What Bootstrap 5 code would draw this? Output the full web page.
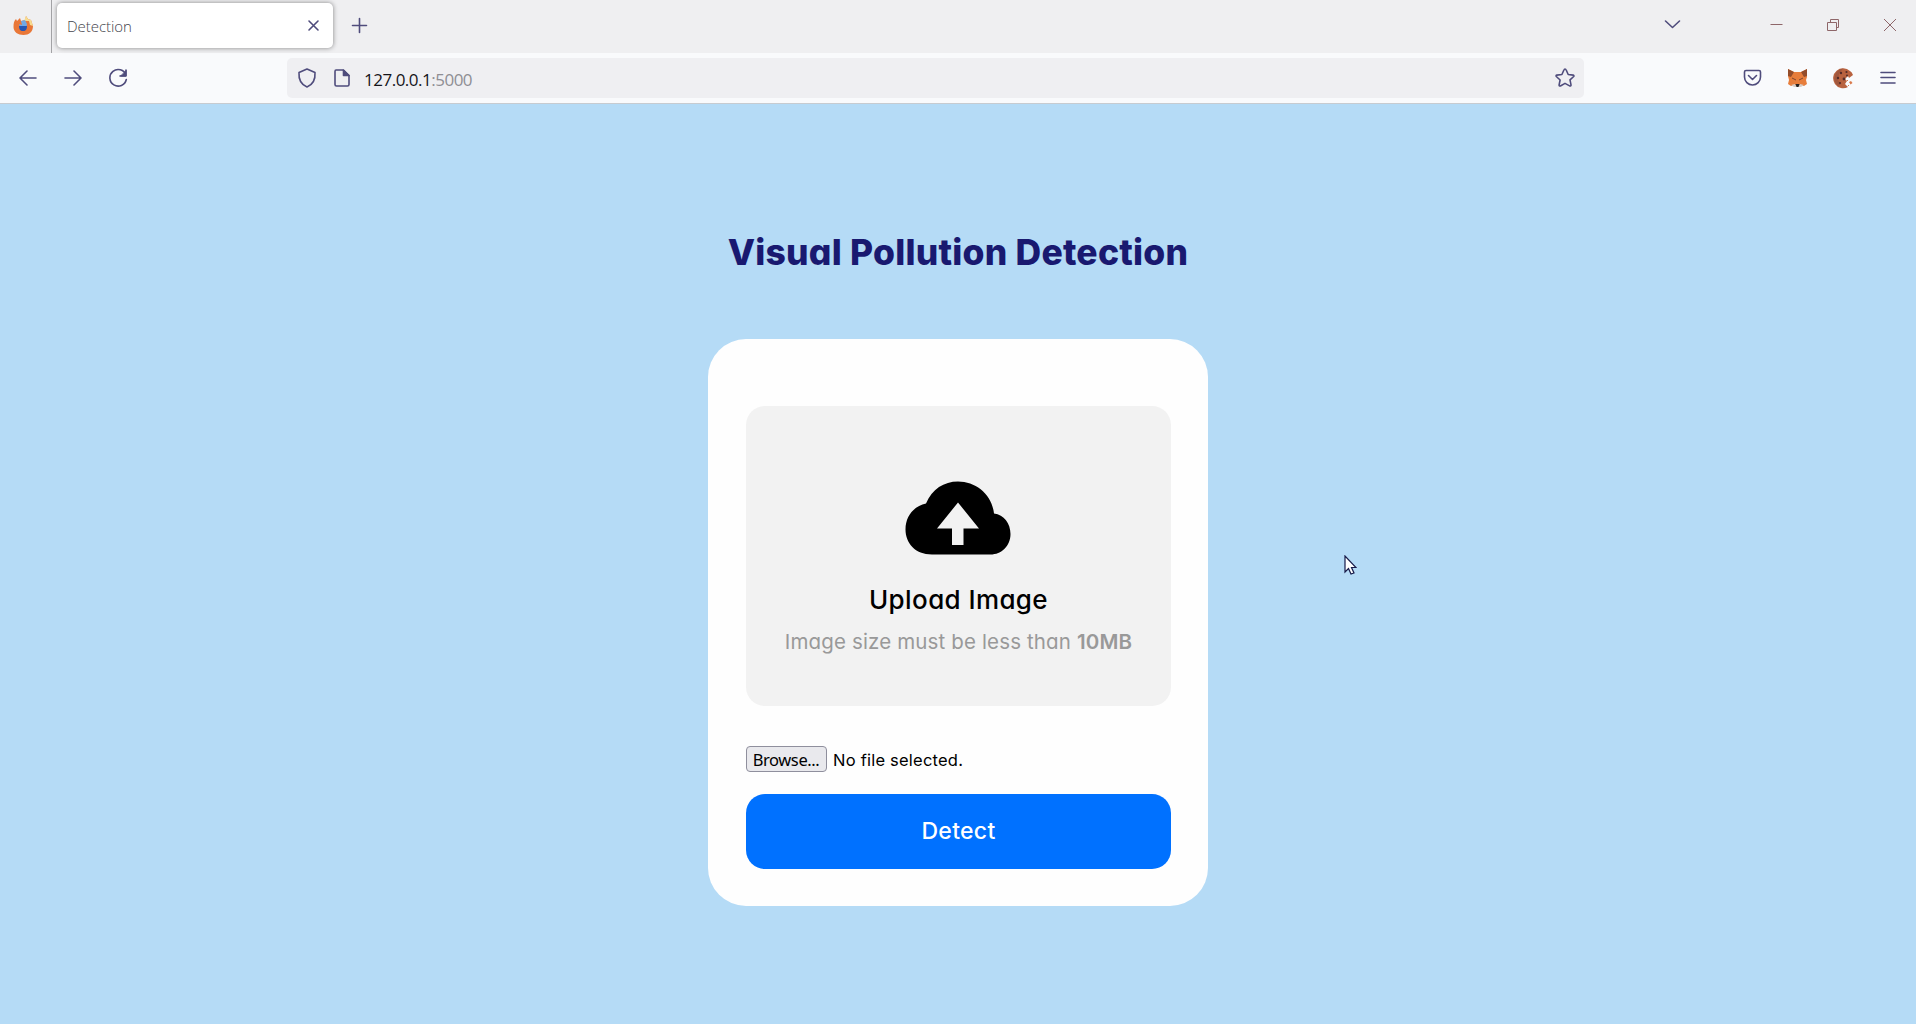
<!DOCTYPE html>
<html lang="en">
<head>
<meta charset="utf-8">
<title>Detection</title>
<link rel="stylesheet" href="https://cdn.jsdelivr.net/npm/bootstrap@5.3.0/dist/css/bootstrap.min.css">
<style>
html, body { height: 100%; }
body { background: #b5dbf6; overflow: hidden; font-family: Inter, "Liberation Sans", sans-serif; color: #000; }
svg { display: block; flex: none; }
.ico { fill: none; stroke: #4f4c7c; stroke-width: 1.6; stroke-linecap: round; stroke-linejoin: round; }
.tabstrip { height: 53px; background: #efeff1; }
.pin { width: 52px; border-right: 1px solid #a3a3a6; padding-left: 13px; }
.browser-tab { width: 276px; height: 45px; margin: 3px 0 0 5px; padding: 0 15px 0 10px; background: #fff; border-radius: 5px; box-shadow: 0 0 5px rgba(0,0,0,.45); }
.browser-tab span { font: 300 15px "Open Sans", sans-serif; letter-spacing: -.05px; color: #45454d; }
.new-tab { margin: 16px 0 0 17px; }
.window-controls { padding: 0 19px 3px 0; }
.toolbar-row { height: 51px; background: #f9fafc; border-bottom: 1px solid #c7cbd0; padding-left: 18px; padding-right: 19px; }
.address { width: 1297px; height: 40px; margin-left: 159px; padding: 0 9px 0 10px; background: #efeff2; border-radius: 5px; }
.url-text { font: 17px "Open Sans", "Noto Sans", sans-serif; margin-left: 14px; padding-top: 3px; color: #15141a; letter-spacing: -.5px; white-space: nowrap; }
.url-text span { color: #8e8e94; }
.extensions { width: 155px; }
.brand-type { font-feature-settings: "cv11", "ss03"; white-space: nowrap; line-height: 1; }
.page-title { font-size: 35.5px; font-weight: 800; color: #191970; margin: 131px 0 68.5px; letter-spacing: .22px; }
.panel { width: 500px; height: 567px; border-radius: 38px; padding: 67px 37px 0 38px; background: #fefefe; }
.drop { height: 300px; border-radius: 19px; background: #f2f2f2; padding-top: 75px; }
.drop svg { margin-right: 2px; }
.drop h2 { font-size: 26px; font-weight: 500; margin: 32px 0 0; letter-spacing: .4px; }
.drop p { font-size: 20.5px; font-weight: 400; color: #999; margin: 19px 0 0; letter-spacing: .14px; }
.drop p b { font-weight: 600; }
.picker { height: 26px; margin-top: 40px; }
.browse { width: 81px; height: 26px; border: 1px solid #8f8f9d; border-radius: 4px; background: #e9e9ed; font: 16.5px/22px "Noto Sans", sans-serif; padding: 1px 1px 0 0; color: #000; letter-spacing: -.4px; }
.nofile { font-size: 16.5px; margin-left: 6px; padding-top: 2px; letter-spacing: .22px; }
.detect { height: 75px; margin-top: 22px; padding: 0; border-radius: 19px; background: #0071ff; border: 0; color: #fff; font-size: 23px; font-weight: 500; letter-spacing: .3px; }
.pointer { position: absolute; left: 1344px; top: 555px; }
</style>
<script src="https://cdn.jsdelivr.net/npm/bootstrap@5.3.0/dist/js/bootstrap.bundle.min.js"></script>
</head>
<body class="d-flex flex-column">
<header>
  <div class="tabstrip d-flex align-items-start">
    <div class="pin h-100 d-flex align-items-center">
      <svg width="21" height="21" viewBox="0 0 21 21"><path d="M3 3l1 2 3-3 1 3 4-1 1-4 2 3 3 1 2 6c0 6-4 9-9.500 9S.500 16 .500 11C.500 7 1 5 3 3z" fill="#e97738"/><path d="M13 0l2 3 3 1 2 6-3-1-1-4-5 0z" fill="#f6dc91"/><path d="M8 5l4-1 2 4-1 5-6-2-1-3 3 1z" fill="#71a8e5"/><path d="M6 10h8c0 3-1 5-4 5s-4-2-4-5z" fill="#2556b4"/></svg>
    </div>
    <div class="browser-tab d-flex align-items-center justify-content-between">
      <span>Detection</span>
      <svg class="ico overflow-visible" width="9" height="9" viewBox="0 0 9 9"><path d="M0 0l9 9M9 0l-9 9"/></svg>
    </div>
    <svg class="ico new-tab" width="20" height="20" viewBox="0 0 20 20"><path d="M2.500 9.500h14M9.500 2.500v14"/></svg>
    <div class="window-controls ms-auto d-flex align-items-center h-100">
      <svg width="234" height="20" viewBox="0 0 234 20" fill="none" stroke="#8e6669" stroke-width="1"><path class="ico" d="M2.500 6l7 6.500 7-6.500"/><path d="M107.500 9.500h12M164.500 7.500h9v8h-9zM167.500 7.500v-3h8v8h-2M221 4l12 12M233 4l-12 12"/></svg>
    </div>
  </div>
  <div class="toolbar-row d-flex align-items-center">
    <svg class="ico" width="110" height="20" viewBox="0 0 110 20"><path d="M18 10H2M9 3l-7 7 7 7M47 10h16M56 3l7 7-7 7M108 7a8.300 8.300 0 1 0 .3 4.500M108 2v6h-6"/><path d="M108 3v5h-5z" fill="#4f4c7c" stroke-width="1"/></svg>
    <div class="address d-flex align-items-center">
      <svg class="ico" width="20" height="22" viewBox="0 0 20 22"><path d="M10 2l8 3.500c.5 7-2 12-8 14.500C4 17.500 1.500 12.500 2 5.500z"/></svg>
      <svg class="ico ms-3" width="17" height="20" viewBox="0 0 17 20"><path d="M3 2h7l6 5.500v9q0 1.500-1.500 1.500h-11Q2 18 2 16.500v-13Q2 2 3 2z"/><path d="M10.500 2v5.500H16z" fill="#4f4c7c"/></svg>
      <div class="url-text">127.0.0.1<span>:5000</span></div>
      <svg class="ico ms-auto" width="20" height="20" viewBox="0 0 20 20"><path d="M10 1q.8 0 1.200 1l2 4.500 5 .6q1.200.4.5 1.400l-3.700 3.400 1 5q0 1.400-1.400 1L10 15.400 5.400 18q-1.300.3-1.300-1l1-5-3.800-3.500Q.6 7.400 1.900 7.100l5-.6L8.900 2Q9.300 1 10 1z"/></svg>
    </div>
    <div class="extensions ms-auto d-flex align-items-center justify-content-between">
      <svg class="ico" width="20" height="20" viewBox="0 0 20 20"><path d="M4 2.500h13q1.500 0 1.500 1.500v5a8 8 0 0 1-16 0V4q0-1.500 1.500-1.500zM6.500 7.500l4 4 4-4"/></svg>
      <svg width="21" height="20" viewBox="0 0 21 20"><path d="M1 1l6 3h7l6-3v8l-1 3 1 4-3 2H4l-3-2 1-4-1-4z" fill="#e77d3b"/><path d="M1 1l6 3-3 5-3-1zM20 1l-6 3 3 5 3-1z" fill="#934c2a"/><path d="M4 17l4-1 2 3h-3zM17 17l-4-1-2 3h3z" fill="#d8ccc5"/><path d="M5 10l4 2M16 10l-4 2" stroke="#7b4531"/><path d="M8.500 16h4l-1 3h-2z" fill="#222"/></svg>
      <svg width="21" height="21" viewBox="0 0 21 21"><path d="M17 3A10 10 0 1 0 15 19l-3-3 2-3-2-2 3-3 1 2 4-3q-1-3-3-4z" fill="#b8623f"/><path d="M10 .5A10 10 0 0 0 5 18l3-2-3-4 1-6z" fill="#a1573d"/><g fill="#542c28"><circle cx="8" cy="5" r="1.200"/><circle cx="13.500" cy="4" r="1.100"/><circle cx="5" cy="10" r="1.200"/><circle cx="11" cy="11" r="1.400"/><circle cx="7" cy="15" r="1.100"/><circle cx="14" cy="7.500" r="1"/></g><path d="M16 14l2-1 1.500 2-2 1.500zM14 12h1v1h-1zM15 17h1v1h-1z" fill="#d97a4c"/></svg>
      <svg class="ico" width="18" height="18" viewBox="0 0 18 18"><path d="M2 3.500h14M2 8.500h14M2 14h14"/></svg>
    </div>
  </div>
</header>
<main class="d-flex flex-column align-items-center">
  <h1 class="page-title brand-type">Visual Pollution Detection</h1>
  <section class="panel">
    <div class="drop d-flex flex-column align-items-center">
      <svg width="106" height="74" viewBox="0 0 106 74"><path fill-rule="evenodd" d="M27 73.500C10 73.500.500 62 .500 48.500.500 35 9 25 21 22.500 27 8 39 .5 53 .5c18 0 34 13 36 32 10 1 16.500 10 16.500 20.500 0 12-9 20.500-20 20.500zM53 21.500L32 47.500h15V64h11.500V47.500H74z"/></svg>
      <h2 class="brand-type">Upload Image</h2>
      <p class="brand-type">Image size must be less than <b>10MB</b></p>
    </div>
    <div class="picker d-flex align-items-center">
      <button class="browse" type="button">Browse...</button>
      <span class="nofile brand-type">No file selected.</span>
    </div>
    <button class="detect brand-type w-100" type="button">Detect</button>
  </section>
</main>
<svg class="pointer" width="13" height="21" viewBox="0 0 13 21"><path d="M1 1v16l3.500-3.500L7 19l3-1-2.500-5.500H12z" fill="#fff" stroke="#171a49" stroke-width="1.200"/></svg>
</body>
</html>
